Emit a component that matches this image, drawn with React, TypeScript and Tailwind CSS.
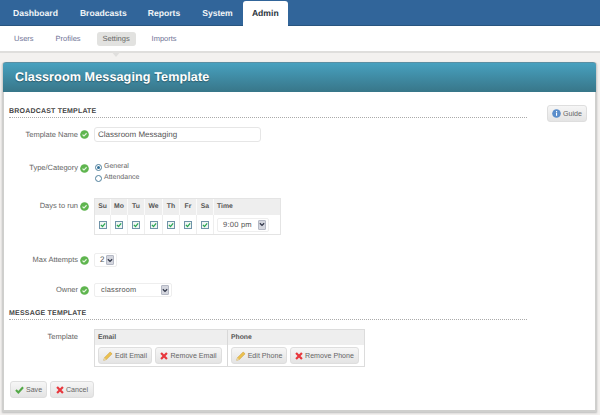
import React from 'react';

const sans = "font-['Liberation_Sans',Arial,sans-serif]";

const OkIcon = () => (
  <svg width="9" height="9" viewBox="0 0 10 10" className="shrink-0">
    <circle cx="5" cy="5" r="4.8" fill="#5fb54f" />
    <path d="M2.8 5.1 4.4 6.7 7.3 3.6" fill="none" stroke="#e8f6e4" strokeWidth="1.3" />
  </svg>
);

const Arrow = () => (
  <span className="flex h-[10px] w-[8px] shrink-0 items-center justify-center rounded-[1px] border border-[#b4b8c4] bg-[#d4d6de]">
    <svg width="6" height="5" viewBox="0 0 7 5">
      <path d="M1 1 3.5 3.6 6 1" fill="none" stroke="#33384a" strokeWidth="1.5" />
    </svg>
  </span>
);

const Pencil = () => (
  <svg width="10" height="10" viewBox="0 0 11 11" className="shrink-0">
    <path d="M.8 10.2 1.6 7.4 7.9 1.1 10 3.1 3.6 9.4Z" fill="#ecc24f" stroke="#c99a35" strokeWidth=".6" />
    <path d="M.8 10.2 1.6 7.4 3.6 9.4Z" fill="#e9d7a8" />
  </svg>
);

const Cross = () => (
  <svg width="8" height="8" viewBox="0 0 9 9" className="shrink-0">
    <path d="M1.2 1.2 7.8 7.8M7.8 1.2 1.2 7.8" fill="none" stroke="#e8373d" strokeWidth="2.5" />
  </svg>
);

const Check = () => (
  <svg width="9" height="8" viewBox="0 0 10 9" className="shrink-0">
    <path d="M1 4.6 3.7 7.2 9 1.4" fill="none" stroke="#54a948" strokeWidth="2.4" />
  </svg>
);

const Info = () => (
  <svg width="9" height="9" viewBox="0 0 9 9" className="shrink-0">
    <circle cx="4.5" cy="4.5" r="4.3" fill="#5b8ecb" />
    <rect x="4" y="3.6" width="1.1" height="3.2" fill="#fff" />
    <rect x="4" y="2" width="1.1" height="1.1" fill="#fff" />
  </svg>
);

const Box = () => (
  <span className="flex h-[8px] w-[8px] items-center justify-center border border-[#6f93a8] bg-[#f0f6f4]">
    <svg width="6" height="6" viewBox="0 0 7 7">
      <path d="M1 3.4 2.9 5.3 6 1.6" fill="none" stroke="#2aa653" strokeWidth="1.5" />
    </svg>
  </span>
);

const Btn = ({ icon, label, className }: any) => (
  <button className={`flex h-[17px] shrink-0 items-center justify-center gap-[2px] whitespace-nowrap rounded-[3px] border border-[#dedede] bg-gradient-to-b from-[#f6f6f6] to-[#e4e4e4] text-[7.1px] text-[#666] ${className}`}>
    {icon}
    <span className="pt-[1px]">{label}</span>
  </button>
);

const Heading = ({ children }: any) => (
  <div className="w-[518px] border-b border-dotted border-[#aaa] text-[7px] font-bold leading-[10px] tracking-[0.2px] text-[#444]">
    {children}
  </div>
);

const Label = ({ text, ok = true }: any) => (
  <div className="flex w-[80px] shrink-0 items-center justify-end gap-[2px] whitespace-nowrap text-[7.5px] leading-[12px] text-[#666]">
    <span>{text}</span>
    {ok ? <OkIcon /> : <span className="w-[9px]" />}
  </div>
);

const days = ['Su', 'Mo', 'Tu', 'We', 'Th', 'Fr', 'Sa'];
const dayWidths = ['w-[16px]', 'w-[17px]', 'w-[17px]', 'w-[18px]', 'w-[17px]', 'w-[17px]', 'w-[17px]'];

export default function App() {
  return (
    <div className={`h-[415px] w-[600px] overflow-hidden bg-[#f3f1ef] [text-rendering:geometricPrecision] ${sans}`}>
      <nav className="flex h-[26px] items-end border-b border-[#28557f] bg-[#31659a] pl-[13px] text-[8.6px] font-bold text-[#f2f5f8]">
        <span className="mr-[22px] h-[18px]">Dashboard</span>
        <span className="mr-[21px] h-[18px]">Broadcasts</span>
        <span className="mr-[22px] h-[18px]">Reports</span>
        <span className="mr-[10px] h-[18px]">System</span>
        <span className="-mb-px flex h-[25px] w-[45px] items-center justify-center rounded-t-[3px] bg-white text-[#2c3440]">Admin</span>
      </nav>

      <div className="relative flex h-[27px] items-center border-b-2 border-[#dfdedc] bg-white pl-[14px] text-[7.5px] text-[#6f7396]">
        <span className="mr-[22px]">Users</span>
        <span className="mr-[16px]">Profiles</span>
        <span className="mr-[16px] flex h-[14px] w-[39px] items-center justify-center rounded-[3px] bg-[#e2e2e0] text-[#666]">Settings</span>
        <span>Imports</span>
        <span className="absolute top-[25px] left-[111px] h-[6px] w-[10px] bg-[#e0dfdd] [clip-path:polygon(0_0,100%_0,50%_100%)]" />
      </div>

      <main className="ml-[2px] mt-[9px] h-[350px] w-[595px] rounded-t-[3px] border-x-2 border-b-2 border-[#cfcfcd] bg-white shadow-[0_1px_2px_#bbb]">
        <div className="-mx-px flex h-[30px] items-center rounded-t-[3px] border-t border-[#5a8fa3] bg-gradient-to-b from-[#47a1bf] to-[#387689] pl-[12px] text-[12.6px] font-bold tracking-[0.1px] text-white [text-shadow:0_1px_1px_#2c5a68]">
          Classroom Messaging Template
        </div>

        <div className="relative flex pl-[5px]">
          <div className="w-[538px] shrink-0 pt-[15px]">
            <Heading>BROADCAST TEMPLATE</Heading>

            <div className="mt-[9px] flex items-center">
              <Label text="Template Name" />
              <div className="ml-[5px] flex h-[15px] w-[167px] items-center rounded-[3px] border border-[#e6e6e6] pl-[3px] text-[8px] text-[#555]">
                Classroom Messaging
              </div>
            </div>

            <div className="mt-[20px] flex items-start">
              <Label text="Type/Category" />
              <div className="ml-[6px] flex flex-col gap-[1px] text-[7px] leading-[10px] text-[#666]">
                <div className="flex h-[10px] items-center gap-[2px]">
                  <span className="flex h-[7px] w-[7px] items-center justify-center rounded-full border border-[#4f7f9c]">
                    <span className="h-[3px] w-[3px] rounded-full bg-[#2f6f98]" />
                  </span>
                  General
                </div>
                <div className="flex h-[10px] items-center gap-[2px]">
                  <span className="h-[7px] w-[7px] rounded-full border border-[#4f7f9c]" />
                  Attendance
                </div>
              </div>
            </div>

            <div className="mt-[15px] flex items-start">
              <div className="pt-[2px]">
                <Label text="Days to run" />
              </div>
              <div className="ml-[5px] w-[187px] border border-[#e4e4e4] text-[6.8px] text-[#555]">
                <div className="flex h-[16px] items-center bg-[#eeeeee] font-bold">
                  {days.map((d, i) => (
                    <span key={d} className={`flex h-full items-center justify-center border-r border-[#fafafa] ${dayWidths[i]}`}>{d}</span>
                  ))}
                  <span className="pl-[3px]">Time</span>
                </div>
                <div className="flex h-[19px] items-center">
                  {days.map((d, i) => (
                    <span key={d} className={`flex h-full items-center justify-center border-r border-[#eeeeee] ${dayWidths[i]}`}><Box /></span>
                  ))}
                  <div className="ml-[3px] flex h-[14px] w-[52px] items-center justify-between whitespace-nowrap rounded-[2px] border border-[#eeeeee] pl-[5px] pr-[2px] text-[7.6px] tracking-[0.2px]">
                    9:00 pm <Arrow />
                  </div>
                </div>
              </div>
            </div>

            <div className="mt-[18px] flex items-center">
              <Label text="Max Attempts" />
              <div className="ml-[5px] flex h-[14px] w-[23px] items-center justify-between rounded-[2px] border border-[#eeeeee] pl-[5px] pr-[2px] text-[8px] text-[#555]">
                2 <Arrow />
              </div>
            </div>

            <div className="mt-[16px] flex items-center">
              <Label text="Owner" />
              <div className="ml-[5px] flex h-[14px] w-[78px] items-center justify-between rounded-[2px] border border-[#eeeeee] pl-[6px] pr-[2px] text-[7.4px] tracking-[0.2px] text-[#555]">
                classroom <Arrow />
              </div>
            </div>

            <div className="mt-[12px]">
              <Heading>MESSAGE TEMPLATE</Heading>
            </div>

            <div className="mt-[9px] flex items-start">
              <div className="pt-[2px]">
                <Label text="Template" ok={false} />
              </div>
              <div className="ml-[5px] w-[271px] border border-[#dcdcdc] text-[6.8px] text-[#555]">
                <div className="flex h-[15px] items-center bg-[#eeeeee] font-bold leading-[15px]">
                  <span className="h-full w-[133px] border-r border-[#d8d8d8] pl-[3px]">Email</span>
                  <span className="h-full pl-[3px]">Phone</span>
                </div>
                <div className="flex h-[21px] items-center">
                  <div className="flex h-full w-[133px] items-center gap-[3px] border-r border-[#d8d8d8] pl-[3px]">
                    <Btn className="w-[54px]" icon={<Pencil />} label="Edit Email" />
                    <Btn className="w-[67px]" icon={<Cross />} label="Remove Email" />
                  </div>
                  <div className="flex items-center gap-[3px] pl-[3px]">
                    <Btn className="w-[56px]" icon={<Pencil />} label="Edit Phone" />
                    <Btn className="w-[69px]" icon={<Cross />} label="Remove Phone" />
                  </div>
                </div>
              </div>
            </div>

            <div className="ml-[1px] mt-[14px] flex gap-[3px]">
              <Btn className="w-[37px]" icon={<Check />} label="Save" />
              <Btn className="w-[44px]" icon={<Cross />} label="Cancel" />
            </div>
          </div>

          <div className="pt-[13px]">
            <Btn className="w-[40px]" icon={<Info />} label="Guide" />
          </div>
        </div>
      </main>
    </div>
  );
}
